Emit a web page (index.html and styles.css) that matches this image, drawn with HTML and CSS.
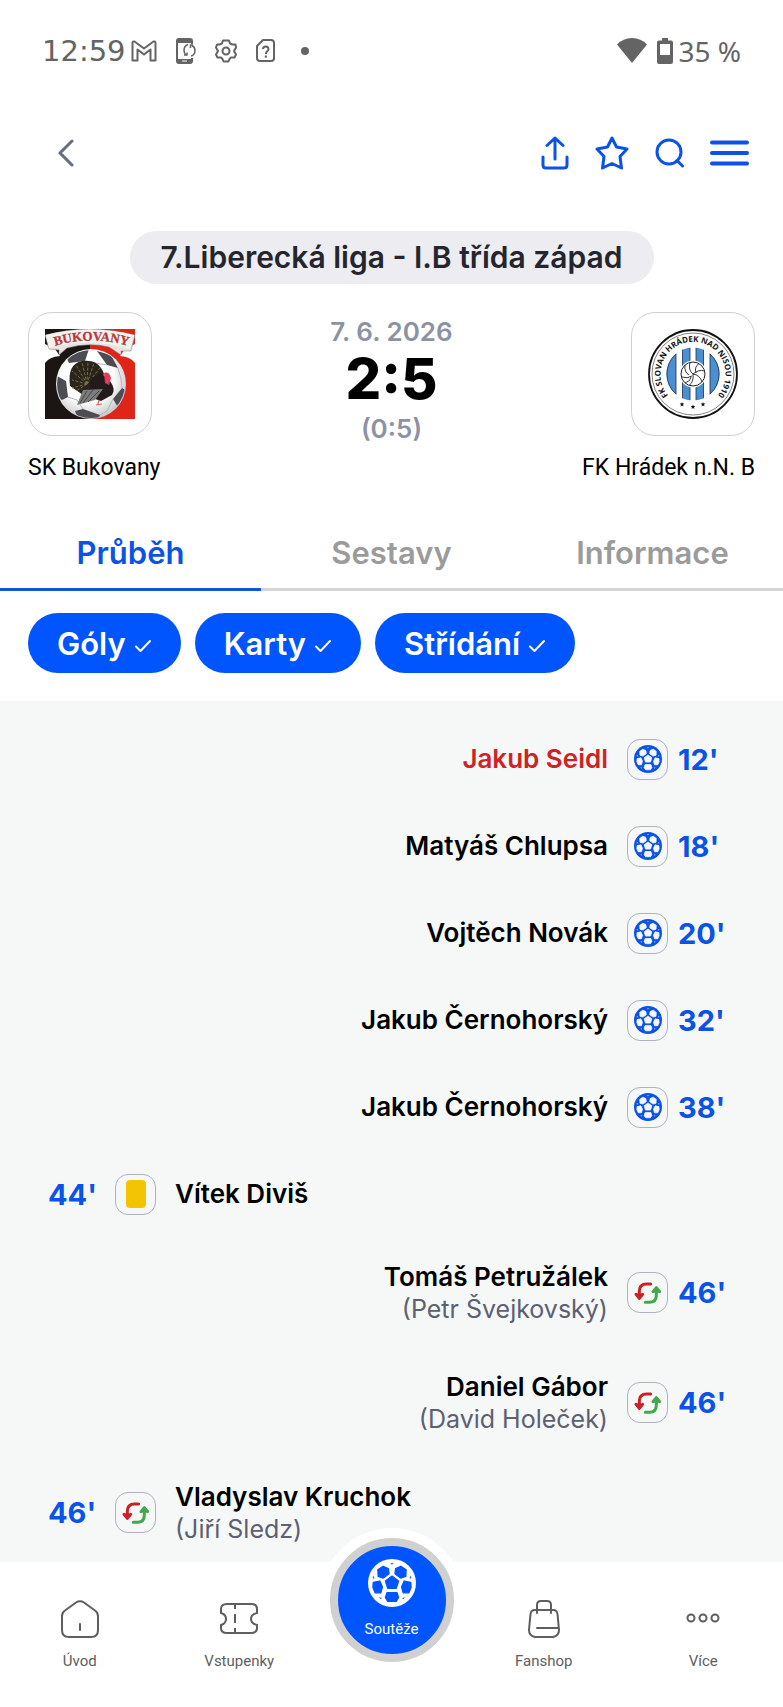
FILE: index.html
```html
<!DOCTYPE html>
<html lang="cs">
<head>
<meta charset="utf-8">
<meta name="viewport" content="width=device-width, initial-scale=1">
<title>SK Bukovany – FK Hrádek n.N. B</title>
<link rel="stylesheet" href="styles.css">
</head>
<body>
<svg class="defs" width="0" height="0" aria-hidden="true">
  <symbol id="ball" viewBox="-73 -73 146 146">
    <circle r="73" fill="currentColor"/>
    <g class="ball-holes">
      <path d="M0-21 20-6 13 16H-13L-20-6Z"/>
      <path d="M-43-40-27-51-11-44-9-28-26-15-42-20Z"/>
      <path d="M43-40 27-51 11-44 9-28 26-15 42-20Z"/>
      <path d="M-57-2-37-6-29 12-34 30-51 30-58 14Z"/>
      <path d="M57-2 37-6 29 12 34 30 51 30 58 14Z"/>
      <path d="M-15 29H15L20 44 13 56H-13L-20 44Z"/>
      <path class="ball-dot" d="M-4-60H4L0-56ZM-57-21-54-14-58-15ZM57-21 54-14 58-15ZM-38 44-32 46-34 49ZM38 44 32 46 34 49Z"/>
    </g>
  </symbol>
  <symbol id="swap" viewBox="-42 -42 84 84">
    <g fill="none" stroke-width="9" stroke-linecap="round" stroke-linejoin="round">
      <path stroke="#cb2026" d="M8-27H-4Q-26-27-26-6V14"/>
      <path stroke="#cb2026" fill="#cb2026" d="M-36 4-26 16-16 4-26 8Z"/>
      <path stroke="#43a84c" d="M-8 28H4Q25 28 25 6V-12"/>
      <path stroke="#43a84c" fill="#43a84c" d="M15-4 25-16 35-4 25-8Z"/>
    </g>
  </symbol>
  <symbol id="check" viewBox="0 0 18 14">
    <path fill="none" stroke="currentColor" stroke-width="2" stroke-linecap="round" stroke-linejoin="round" d="M2 7.500 6.500 12 16 2"/>
  </symbol>
</svg>

<div class="status">
  <span class="clock">12:59</span>
  <div class="status-icons">
    <svg width="26" height="22" viewBox="0 0 26 22" fill="none" stroke="currentColor" stroke-width="2" stroke-linejoin="round"><path d="M1.500 20.500V3Q1.500 1 3.500 1.500L13 8.500 22.500 1.500Q24.500 1 24.500 3V20.500H19.500V9.500L13 14.500 6.500 9.500V20.500Z"/></svg>
    <svg width="20" height="26" viewBox="0 0 20 26" fill="none" stroke="currentColor"><path stroke-width="2" d="M16 6V3Q16 1 14 1H3Q1 1 1 3V23Q1 25 3 25H14Q16 25 16 23V20"/><path fill="currentColor" stroke="none" d="M1 2H16V5H1ZM1 21H16V25H1Z"/><path stroke="#fff" d="M6 23H11"/><path stroke-width="1.500" d="M12 6.500Q8 8 8 12.500 8 15 10 17M8 17H11V14.500M15 18Q19 17 19 12.500 19 9 16 7.500M14.500 10V7H17"/></svg>
    <svg width="22" height="24" viewBox="-11 -12 22 24" fill="none" stroke="currentColor" stroke-width="2" stroke-linejoin="round"><path d="M-3-10.500H3L4-7.500 6.500-6.500 9.500-6.500 10-3.500 8 0 10 3.500 8.500 6.500 5 6.500 3.500 8 2.500 10.500H-2.500L-3.500 8-5 6.500-8.500 6.500-10 3.500-8 0-10-3.500-9-6.500-6.500-6.500-4-7.500Z"/><circle r="3.500"/></svg>
    <svg width="19" height="23" viewBox="0 0 19 23" fill="none" stroke="currentColor" stroke-width="2"><path d="M7 1H15Q18 1 18 4V19Q18 22 15 22H4Q1 22 1 19V7Z" stroke-linejoin="round"/><path d="M7 10Q7 7.500 9.800 7.500 12.500 7.500 12.500 10 12.500 11.500 11 12.500 9.800 13.500 9.800 15M9.800 16.500V18.800"/></svg>
    <svg width="8" height="8" viewBox="0 0 8 8"><circle cx="4" cy="4" r="4" fill="currentColor"/></svg>
  </div>
  <div class="status-right">
    <svg width="30" height="25" viewBox="0 0 30 25"><path fill="currentColor" d="M0 6.500Q6 0 15 0T30 6.500L15 25Z"/></svg>
    <svg width="16" height="26" viewBox="0 0 16 26"><path fill="currentColor" fill-rule="evenodd" d="M5 0H11V2.500H14Q16 2.500 16 4.500V24Q16 26 14 26H2Q0 26 0 24V4.500Q0 2.500 2 2.500H5ZM3 6V17H13V6Z"/></svg>
    <span class="battery">35 %</span>
  </div>
</div>

<header class="topbar">
  <button class="icon-btn back" aria-label="Zpět"><svg width="18" height="30" viewBox="0 0 18 30" fill="none" stroke="currentColor" stroke-width="3" stroke-linecap="round" stroke-linejoin="round"><path d="M16 3 4 15 16 27"/></svg></button>
  <div class="actions">
    <button class="icon-btn" aria-label="Sdílet"><svg width="28" height="34" viewBox="0 0 28 34" fill="none" stroke="currentColor" stroke-width="3" stroke-linecap="round" stroke-linejoin="round"><path d="M14 23V2M6 9.500 14 2 22 9.500M2 21V29Q2 32 5 32H23Q26 32 26 29V21"/></svg></button>
    <button class="icon-btn" aria-label="Oblíbené"><svg width="34" height="34" viewBox="0 0 34 34" fill="none" stroke="currentColor" stroke-width="3" stroke-linejoin="round"><path d="M17 2 21.500 11 32 13 25 20.500 26.500 32 17 27.500 7.500 32 9 20.500 2 13 12.500 11Z"/></svg></button>
    <button class="icon-btn" aria-label="Hledat"><svg width="29" height="30" viewBox="0 0 29 30" fill="none" stroke="currentColor" stroke-width="3" stroke-linecap="round"><circle cx="14" cy="14" r="12"/><path d="M22 22.500 27.500 28"/></svg></button>
    <button class="icon-btn" aria-label="Menu"><svg width="39" height="26" viewBox="0 0 39 26" fill="none" stroke="currentColor" stroke-width="4" stroke-linecap="round"><path d="M2 2.500H37M2 13H37M2 23.500H37"/></svg></button>
  </div>
</header>

<main>
  <h1 class="league">7.Liberecká liga - I.B třída západ</h1>

  <section class="match">
    <div class="team">
      <div class="crest">
        <svg width="90" height="90" viewBox="0 0 90 90" role="img" aria-label="Bukovany">
          <defs>
            <radialGradient id="shade" cx=".45" cy=".4" r=".6"><stop offset=".6" stop-color="#fff"/><stop offset="1" stop-color="#c9c9cb"/></radialGradient>
            <clipPath id="disc"><circle cx="46" cy="55" r="34"/></clipPath>
            <path id="banner" d="M6 18Q45 5 87 18"/>
          </defs>
          <path fill="#1b1614" d="M0 0H45V90H0Z"/><path fill="#df2419" d="M45 0H90V90H45Z"/>
          <path fill="#fff" d="M0 15 10 20 15 27Q4 28 0 34ZM90 15 80 20 75 27Q86 28 90 34Z"/>
          <path fill="#e6e3e1" stroke="#777" stroke-width=".5" d="M0 6Q44-6 90 6L86 22H76V26L64 18Q44 13 22 19L14 26V21L4 20Z"/>
          <path fill="#f4f2f0" d="M1 6Q44-5 89 6L85 20Q44 8 4 19Z"/>
          <text font-family="Liberation Serif, serif" font-weight="700" font-size="13" fill="#c83232" stroke="#8c4444" stroke-width=".3"><textPath href="#banner" startOffset="50%" text-anchor="middle">BUKOVANY</textPath></text>
          <circle cx="46" cy="55" r="35" fill="url(#shade)"/>
          <g clip-path="url(#disc)" fill="#4c4d52">
            <path d="M22 30 28 24 44 20 40 32 24 34ZM52 22 66 26 73 39 62 36ZM9 58 12 47 21 52 23 68 17 71 11 68ZM68 70 77 59 82 62 74 80ZM30 82 38 80 55 86 52 92H34Z"/>
            <path fill="none" stroke="#b5b3bd" d="M40 32 50 34 62 36M23 68 32 71 38 80M68 70 62 82 55 86M73 39 76 50 77 59"/>
          </g>
          <path fill="#29251a" d="M25 57Q22 35 37 32 54 30 59 45L50 58 38 66Z"/>
          <g stroke="#817249" stroke-width=".9" stroke-dasharray="3 1.500"><path d="M42 55 27 51M42 55 27 42M42 55 31 36M42 55 37 33M42 55 43 33M42 55 49 34M42 55 55 39M42 55 27 59M42 55 31 62"/></g>
          <path fill="#211b1c" d="M45 50 56 44 65 52Q71 60 67 66L56 72 44 68Z"/>
          <path fill="#797b7d" d="M32 76 38 61 58 60 50 71Z"/><path fill="none" stroke="#33302b" stroke-width=".7" d="M35 74 42 62M38 74 48 61M43 73 54 62"/>
          <path fill="#e13b58" d="M59 44Q64 42 66 49L64 56 60 54Z"/><path fill="none" stroke="#d66a5c" stroke-width="1.200" d="M54 71 53 75M51 76 57 75"/>
        </svg>
      </div>
      <p class="team-name">SK Bukovany</p>
    </div>

    <div class="result">
      <p class="date">7. 6. 2026</p>
      <p class="score">2:5</p>
      <p class="half">(0:5)</p>
    </div>

    <div class="team away">
      <div class="crest">
        <svg width="90" height="90" viewBox="-45 -45 90 90" role="img" aria-label="FK Slovan Hrádek nad Nisou 1910">
          <defs>
            <path id="ring" d="M-20.500 25.500A32.500 32.500 0 1 1 20.500 25.500"/>
            <clipPath id="core"><circle r="26.500"/></clipPath>
          </defs>
          <circle r="44" fill="#fff" stroke="#111" stroke-width="1.800"/><circle r="41" fill="none" stroke="#333" stroke-width=".6"/>
          <g clip-path="url(#core)"><path fill="#4b8fd3" stroke="#1c2f48" stroke-width=".8" d="M-28-30H-17V30H-28ZM-10.500-30H-3V30H-10.500ZM3-30H10.500V30H3ZM17-30H28V30H17Z"/></g>
          <path fill="none" stroke="#1c2f48" stroke-width=".8" d="M-17-20A26.500 26.500 0 0 0-17 20M17-20A26.500 26.500 0 0 1 17 20"/>
          <circle r="13.500" fill="#fff"/><circle r="12" fill="#fff" stroke="#222" stroke-width="1"/>
          <path fill="none" stroke="#222" stroke-width=".9" d="M0 0Q-5-4-3-11.500M3-1Q1-7 6-10.500M0 0Q6-5 11.500-3M0 0Q7 1 9 8M0 0Q1 8-4 11.500M-2 3Q-2 7-8 9M-1 2Q-6 5-11 3M-8-9Q-9-2-4 1"/>
          <text font-family="Open Sans, sans-serif" font-weight="700" font-size="8" fill="#111"><textPath href="#ring" startOffset="50%" text-anchor="middle">FK SLOVAN HRÁDEK NAD NISOU 1910</textPath></text>
          <g fill="#111"><path d="M-11 28-10.400 29.600H-8.600L-10 30.800-9.500 32.500-11 31.500-12.500 32.500-12 30.800-13.400 29.600H-11.600Z"/><path d="M0 30.500.6 32.100H2.400L1 33.300 1.500 35 0 34-1.500 35-1 33.300-2.400 32.100H-.6Z"/><path d="M10 28 10.600 29.600H12.400L11 30.800 11.500 32.500 10 31.500 8.500 32.500 9 30.800 7.600 29.600H9.400Z"/></g>
        </svg>
      </div>
      <p class="team-name">FK Hrádek n.N. B</p>
    </div>
  </section>

  <div class="tabs" role="tablist">
    <button class="tab is-active" role="tab" aria-selected="true">Průběh</button>
    <button class="tab" role="tab" aria-selected="false">Sestavy</button>
    <button class="tab" role="tab" aria-selected="false">Informace</button>
  </div>

  <div class="filters">
    <button class="chip" aria-pressed="true">Góly <svg width="18" height="14"><use href="#check"/></svg></button>
    <button class="chip" aria-pressed="true">Karty <svg width="18" height="14"><use href="#check"/></svg></button>
    <button class="chip" aria-pressed="true">Střídání <svg width="18" height="14"><use href="#check"/></svg></button>
  </div>

  <ol class="events">
    <li class="event away"><span class="minute">12'</span><span class="badge"><svg width="28" height="28"><use href="#ball"/></svg></span><div><p class="player highlight">Jakub Seidl</p></div></li>
    <li class="event away"><span class="minute">18'</span><span class="badge"><svg width="28" height="28"><use href="#ball"/></svg></span><div><p class="player">Matyáš Chlupsa</p></div></li>
    <li class="event away"><span class="minute">20'</span><span class="badge"><svg width="28" height="28"><use href="#ball"/></svg></span><div><p class="player">Vojtěch Novák</p></div></li>
    <li class="event away"><span class="minute">32'</span><span class="badge"><svg width="28" height="28"><use href="#ball"/></svg></span><div><p class="player">Jakub Černohorský</p></div></li>
    <li class="event away"><span class="minute">38'</span><span class="badge"><svg width="28" height="28"><use href="#ball"/></svg></span><div><p class="player">Jakub Černohorský</p></div></li>
    <li class="event"><span class="minute">44'</span><span class="badge"><span class="card"></span></span><div><p class="player">Vítek Diviš</p></div></li>
    <li class="event away sub"><span class="minute">46'</span><span class="badge"><svg width="28" height="28"><use href="#swap"/></svg></span><div><p class="player">Tomáš Petružálek</p><p class="off">(Petr Švejkovský)</p></div></li>
    <li class="event away sub"><span class="minute">46'</span><span class="badge"><svg width="28" height="28"><use href="#swap"/></svg></span><div><p class="player">Daniel Gábor</p><p class="off">(David Holeček)</p></div></li>
    <li class="event sub"><span class="minute">46'</span><span class="badge"><svg width="28" height="28"><use href="#swap"/></svg></span><div><p class="player">Vladyslav Kruchok</p><p class="off">(Jiří Sledz)</p></div></li>
  </ol>
</main>

<nav class="bottom">
  <a class="nav-item" href="#uvod"><svg width="38" height="38" viewBox="0 0 38 38" fill="none" stroke="currentColor" stroke-width="2" stroke-linecap="round"><path d="M4 10.500 15 2.500Q19 .2 23 2.500L34 10.500Q37 12.500 37 16V30Q37 37 30 37H8Q1 37 1 30V16Q1 12.500 4 10.500ZM19 24V30"/></svg>Úvod</a>
  <a class="nav-item" href="#vstupenky"><svg width="38" height="38" viewBox="0 0 38 38" fill="none" stroke="currentColor" stroke-width="2"><path d="M7 4H31Q37 4 37 9V13Q31 14.500 31 19T37 25V28Q37 33 31 33H7Q1 33 1 28V25Q6 23.500 6 19T1 13V9Q1 4 7 4ZM15 4V9M15 14V23M15 28V33"/></svg>Vstupenky</a>
  <a class="nav-main" href="#souteze" aria-current="page"><svg width="48" height="48"><use href="#ball"/></svg>Soutěže</a>
  <a class="nav-item" href="#fanshop"><svg width="38" height="38" viewBox="0 0 38 38" fill="none" stroke="currentColor" stroke-width="2" stroke-linecap="round"><path d="M10 10H28Q32 10 32.500 14L34 30Q34 36 28 37H10Q4 36 4 30L5.500 14Q6 10 10 10ZM12 13V5Q12 1 16 1H22Q26 1 26 5V13M12 28H33"/></svg>Fanshop</a>
  <a class="nav-item" href="#vice"><svg width="38" height="38" viewBox="0 0 38 38" fill="none" stroke="currentColor" stroke-width="2"><circle cx="7" cy="18" r="3.500"/><circle cx="19" cy="18" r="3.500"/><circle cx="31" cy="18" r="3.500"/></svg>Více</a>
</nav>
</body>
</html>
```

FILE: styles.css
```css
:root {
  --blue: #0055ff;
  --blue-ink: #0b52e6;
  --gray-ink: #8d92a2;
  --surface: #f6f8f8;
}

* { box-sizing: border-box; margin: 0; padding: 0; }

body {
  min-height: 100vh;
  display: flex;
  flex-direction: column;
  background: #fff;
  color: #000;
  font-family: Inter, "Open Sans", sans-serif;
}

svg { display: block; flex: none; }
.defs { position: absolute; }
button { border: 0; background: none; font: inherit; color: inherit; cursor: pointer; }
a { color: inherit; text-decoration: none; }
main { flex: 1; display: flex; flex-direction: column; }

.status {
  height: 101px;
  padding: 0 42px;
  display: flex;
  align-items: center;
  color: #646464;
}
.clock { font: 29px/36px "DejaVu Sans", sans-serif; }
.status-icons { display: flex; align-items: center; gap: 19px; margin-left: 5px; }
.status-icons svg:last-child { margin-left: 7px; }
.status-right { margin-left: auto; display: flex; align-items: center; gap: 10px; }
.battery { font: 28px/36px "Noto Sans", sans-serif; margin-left: -5px; }

.topbar {
  height: 104px;
  padding: 0 34px 0 56px;
  display: flex;
  align-items: center;
  justify-content: space-between;
  color: var(--blue-ink);
}
.back { color: #666c7e; }
.actions { display: flex; align-items: center; gap: 26px; }

.league {
  align-self: center;
  margin-top: 26px;
  padding: 0 31px;
  border-radius: 27px;
  background: #ececf1;
  color: #24252d;
  font-size: 30px;
  font-weight: 600;
  line-height: 53px;
}

.match {
  display: flex;
  justify-content: space-between;
  margin-top: 28px;
  padding: 0 28px;
}
.team { flex: 1; }
.team.away { display: flex; flex-direction: column; align-items: flex-end; }
.crest {
  width: 124px;
  height: 124px;
  display: grid;
  place-items: center;
  border: 1px solid #d0d0d6;
  border-radius: 24px;
}
.team-name {
  margin-top: 14px;
  font: 23px/36px Roboto, sans-serif;
  white-space: nowrap;
}
.result { padding-top: 6px; text-align: center; }
.date, .half { color: var(--gray-ink); font-size: 26px; font-weight: 600; }
.date { line-height: 28px; }
.score { font-size: 56px; font-weight: 800; line-height: 66px; }
.half { line-height: 34px; }

.tabs { display: grid; grid-template-columns: repeat(3, 1fr); margin-top: 30px; }
.tab {
  height: 75px;
  border-bottom: 3px solid #d6d6d6;
  color: #9b9b9b;
  font-size: 31px;
  font-weight: 600;
}
.tab.is-active { color: var(--blue-ink); border-color: #1154d8; }

.filters { display: flex; gap: 14px; padding: 22px 28px 28px; }
.chip {
  height: 60px;
  padding: 0 29px;
  display: flex;
  align-items: center;
  gap: 8px;
  border-radius: 30px;
  background: var(--blue);
  color: #fff;
  font-size: 31px;
  font-weight: 600;
}
.chip svg { margin-top: 6px; }

.events {
  flex: 1;
  display: flex;
  flex-direction: column;
  gap: 31px;
  padding: 30px 48px 8px;
  background: var(--surface);
  list-style: none;
}
.event { height: 56px; display: flex; align-items: center; }
.event.away { flex-direction: row-reverse; text-align: right; }
.event.sub { height: 79px; }
.minute {
  width: 57px;
  color: var(--blue-ink);
  font-size: 29px;
  font-weight: 700;
  text-align: left;
}
.badge {
  width: 41px;
  height: 41px;
  margin: 0 19px 0 10px;
  display: grid;
  place-items: center;
  border: 1px solid #b0b2c2;
  border-radius: 13px;
  color: var(--blue-ink);
}
.away .badge { margin: 0 10px 0 19px; }
.card { width: 20px; height: 28px; border-radius: 4px; background: #f3c402; }
.player { font-size: 26px; font-weight: 600; line-height: 32px; }
.player.highlight { color: #cf2227; }
.off { color: #5d6070; font-size: 25px; line-height: 32px; }
.ball-holes { fill: var(--surface); stroke: var(--surface); stroke-width: 4; stroke-linejoin: round; }
.ball-dot { stroke-width: 1; }

.bottom {
  height: 145px;
  display: grid;
  grid-template-columns: 11fr 11fr 10fr 11fr 11fr;
  background: #fff;
  color: #5e5e5e;
  font: 15px/22px Roboto, sans-serif;
}
.nav-item {
  display: flex;
  flex-direction: column;
  align-items: center;
  gap: 12px;
  padding-top: 38px;
}
.nav-main {
  --surface: var(--blue);
  width: 124px;
  height: 124px;
  margin-top: -24px;
  justify-self: center;
  display: flex;
  flex-direction: column;
  align-items: center;
  gap: 11px;
  padding-top: 13px;
  border: 8px solid #d0d0d0;
  border-radius: 50%;
  box-shadow: 0 0 0 10px #fff;
  background: var(--blue);
  color: #fff;
}
```
